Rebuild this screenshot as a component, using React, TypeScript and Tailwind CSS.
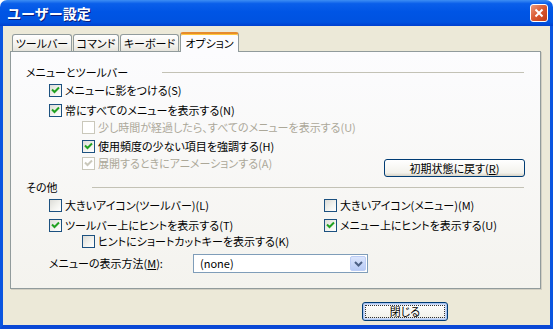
import React from 'react';

type OptionProps = {
  label: string;
  checked?: boolean;
  disabled?: boolean;
  className?: string;
};

function CheckBox({ checked, disabled }: { checked?: boolean; disabled?: boolean }) {
  return (
    <span
      className={`flex h-[13px] w-[13px] shrink-0 items-center justify-center border ${
        disabled
          ? 'border-[#cac8bb] bg-white'
          : 'border-[#1c5180] bg-[linear-gradient(135deg,#dcdcd7,#f4f4f0_60%,#ffffff)]'
      }`}
    >
      {checked && (
        <svg width="11" height="11" viewBox="0 0 11 11">
          <path
            d="M2 4.5 L4.5 7 L9 2.5"
            fill="none"
            stroke={disabled ? '#cac8bb' : '#21a121'}
            strokeWidth="2"
          />
        </svg>
      )}
    </span>
  );
}

function Option({ label, checked, disabled, className = '' }: OptionProps) {
  return (
    <div
      className={`flex h-4 items-center gap-[3px] leading-none ${
        disabled ? 'text-[#aca899]' : 'text-black'
      } ${className}`}
    >
      <CheckBox checked={checked} disabled={disabled} />
      <span className="whitespace-nowrap">{label}</span>
    </div>
  );
}

function GroupHeader({ title, className = '' }: { title: string; className?: string }) {
  return (
    <div className={`flex h-4 items-center leading-none ${className}`}>
      <span className="whitespace-nowrap">{title}</span>
      <span className="ml-[34px] h-px flex-1 bg-[#c3c2b5]" />
    </div>
  );
}

function Tab({ label, width, active }: { label: string; width: string; active?: boolean }) {
  if (active) {
    return (
      <div
        className={`relative z-10 -mb-px flex h-[20px] items-center justify-center rounded-t-[3px] border-x border-t-2 border-x-[#919b9c] border-t-[#e68b2c] bg-[#fcfcfe] shadow-[inset_0_1px_0_#ffc73c] ${width}`}
      >
        {label}
      </div>
    );
  }
  return (
    <div
      className={`flex h-[17px] items-center justify-center rounded-t-[3px] border border-b-0 border-[#919b9c] bg-[linear-gradient(to_bottom,#ffffff,#f3f2ee_60%,#e6e4dc)] ${width}`}
    >
      {label}
    </div>
  );
}

export default function App() {
  return (
    <div className="h-[329px] w-[553px] bg-white font-['Noto_Sans_CJK_JP',sans-serif] text-[11px] text-black [font-feature-settings:'palt']">
      {/* title bar */}
      <div className="flex h-[26px] items-center justify-between rounded-t-[7px] bg-[linear-gradient(to_bottom,#3d8ef4_0%,#0a5fea_14%,#0055e5_45%,#0052e0_85%,#0040cf_100%)] pl-[7px] pr-[5px]">
        <span className="text-[14px] font-bold leading-none text-white [font-feature-settings:normal] [text-shadow:1px_1px_0_#0a1d7a]">
          ユーザー設定
        </span>
        <div className="flex h-[18px] w-[18px] items-center justify-center rounded-[3px] border border-white bg-[linear-gradient(135deg,#ec9a7c,#d9582f_50%,#c03c16)]">
          <svg width="10" height="10" viewBox="0 0 10 10">
            <path d="M1.5 1.5 L8.5 8.5 M8.5 1.5 L1.5 8.5" stroke="#ffffff" strokeWidth="2" />
          </svg>
        </div>
      </div>

      {/* body */}
      <div className="flex h-[303px] flex-col border-x-[3px] border-b-4 border-x-[#0a55e0] border-b-[#0a48d6] bg-[#ece9d8] pl-[7px]">
        <div className="mt-[6px] flex h-[19px] w-[531px] items-end gap-px pl-[2px]">
          <Tab label="ツールバー" width="w-[60px]" />
          <Tab label="コマンド" width="w-[46px]" />
          <Tab label="キーボード" width="w-[59px]" />
          <Tab label="オプション" width="w-[59px]" active />
        </div>

        <div className="flex h-[238px] w-[531px] flex-col border border-[#919b9c] bg-[linear-gradient(to_bottom,#fcfcfe,#f4f3ee)] px-[15px] shadow-[1px_1px_0_#d2cfc2]">
          <GroupHeader title="メニューとツールバー" className="mt-[12px] mr-px" />
          <Option label="メニューに影をつける(S)" checked className="mt-[2px] ml-[23px]" />
          <Option label="常にすべてのメニューを表示する(N)" checked className="mt-[4px] ml-[23px]" />
          <Option
            label="少し時間が経過したら、すべてのメニューを表示する(U)"
            disabled
            className="mt-px ml-[56px]"
          />
          <Option label="使用頻度の少ない項目を強調する(H)" checked className="mt-[3px] ml-[56px]" />
          <div className="mt-px flex h-[22px] items-start justify-between">
            <Option label="展開するときにアニメーションする(A)" checked disabled className="ml-[56px]" />
            <button className="mt-[4px] flex h-[18px] w-[141px] items-center justify-center rounded-[3px] border border-[#003c74] bg-[linear-gradient(to_bottom,#ffffff,#f3f2ec_80%,#d8d3c6)] leading-none">
              初期状態に戻す(<span className="underline">R</span>)
            </button>
          </div>

          <GroupHeader title="その他" className="mt-[2px] mr-px" />
          <div className="mt-[2px] flex">
            <Option label="大きいアイコン(ツールバー)(L)" className="w-[298px] pl-[23px]" />
            <Option label="大きいアイコン(メニュー)(M)" />
          </div>
          <div className="mt-[4px] flex">
            <Option label="ツールバー上にヒントを表示する(T)" checked className="w-[298px] pl-[23px]" />
            <Option label="メニュー上にヒントを表示する(U)" checked />
          </div>
          <Option label="ヒントにショートカットキーを表示する(K)" className="ml-[56px]" />
          <div className="mt-[5px] flex items-center">
            <span className="w-[167px] pl-[23px] leading-none">
              メニューの表示方法(<span className="underline">M</span>):
            </span>
            <div className="flex h-[19px] w-[175px] items-center border border-[#7f9db9] bg-white pl-[6px] leading-none">
              <span className="flex-1">(none)</span>
              <span className="mr-px flex h-[15px] w-[16px] items-center justify-center rounded-[2px] border border-[#bccdf5] bg-[linear-gradient(to_bottom,#dbe5fc,#b7caf5)]">
                <svg width="9" height="6" viewBox="0 0 9 6">
                  <path d="M1 1 L4.5 4.5 L8 1" fill="none" stroke="#4d6185" strokeWidth="2" />
                </svg>
              </span>
            </div>
          </div>
        </div>

        <div className="mt-[13px] flex w-[531px] justify-end pr-[93px]">
          <button className="flex h-[19px] w-[86px] items-stretch rounded-[3px] border border-[#003c74] bg-[linear-gradient(to_bottom,#ffffff,#f3f2ec_80%,#d8d3c6)] p-px shadow-[inset_0_0_0_1px_#a9c3f0,inset_0_0_0_2px_#cedcf7]">
            <span className="m-px flex flex-1 items-center justify-center border border-dotted border-[#333] leading-none">
              閉じる
            </span>
          </button>
        </div>
      </div>
    </div>
  );
}
